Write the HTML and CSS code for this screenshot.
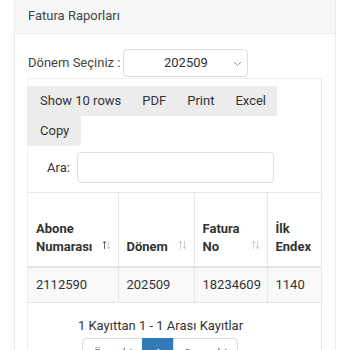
FILE: index.html
```html
<!DOCTYPE html>
<html lang="tr">
<head>
<meta charset="utf-8">
<link rel="stylesheet" href="styles.css">
</head>
<body>
<div class="card">
  <div class="card-header">Fatura Raporları</div>
  <div class="card-body">
    <div class="period">
      <span class="period-label">Dönem Seçiniz :</span>
      <div class="select">
        <span class="select-value">202509</span>
        <svg class="chev" width="9" height="6" viewBox="0 0 9 6"><path d="M1 1 L4.5 4.5 L8 1" fill="none" stroke="#999" stroke-width="1"/></svg>
      </div>
    </div>
    <div class="wrapper">
      <div class="buttons">
        <div class="btn-row">
          <span class="btn">Show 10 rows</span><span class="btn">PDF</span><span class="btn">Print</span><span class="btn">Excel</span>
        </div>
        <div class="btn-row">
          <span class="btn btn-last">Copy</span>
        </div>
      </div>
      <div class="filter">
        <span class="filter-label">Ara:</span>
        <div class="filter-input"></div>
      </div>
      <div class="table-scroll">
        <table class="grid">
          <colgroup>
            <col class="w1"><col class="w2"><col class="w3"><col class="w4">
          </colgroup>
          <thead>
            <tr>
              <th><span class="th-text">Abone<br>Numarası</span><svg class="sort" width="9" height="10" viewBox="0 0 9 10"><path d="M2.5 9 V1.5 M0.8 3.2 L2.5 1.3 L4.2 3.2" fill="none" stroke="#555" stroke-width="0.9"/><path d="M6.5 1 V8.5 M4.8 6.8 L6.5 8.7 L8.2 6.8" fill="none" stroke="#c8c8c8" stroke-width="0.9"/></svg></th>
              <th><span class="th-text">Dönem</span><svg class="sort" width="9" height="10" viewBox="0 0 9 10"><path d="M2.5 9 V1.5 M0.8 3.2 L2.5 1.3 L4.2 3.2" fill="none" stroke="#c8c8c8" stroke-width="0.9"/><path d="M6.5 1 V8.5 M4.8 6.8 L6.5 8.7 L8.2 6.8" fill="none" stroke="#c8c8c8" stroke-width="0.9"/></svg></th>
              <th><span class="th-text">Fatura<br>No</span><svg class="sort" width="9" height="10" viewBox="0 0 9 10"><path d="M2.5 9 V1.5 M0.8 3.2 L2.5 1.3 L4.2 3.2" fill="none" stroke="#c8c8c8" stroke-width="0.9"/><path d="M6.5 1 V8.5 M4.8 6.8 L6.5 8.7 L8.2 6.8" fill="none" stroke="#c8c8c8" stroke-width="0.9"/></svg></th>
              <th><span class="th-text">İlk<br>Endex</span><svg class="sort" width="9" height="10" viewBox="0 0 9 10"><path d="M2.5 9 V1.5 M0.8 3.2 L2.5 1.3 L4.2 3.2" fill="none" stroke="#c8c8c8" stroke-width="0.9"/><path d="M6.5 1 V8.5 M4.8 6.8 L6.5 8.7 L8.2 6.8" fill="none" stroke="#c8c8c8" stroke-width="0.9"/></svg></th>
            </tr>
          </thead>
          <tbody>
            <tr>
              <td>2112590</td>
              <td>202509</td>
              <td>18234609</td>
              <td>1140</td>
            </tr>
          </tbody>
        </table>
      </div>
      <div class="footer">
        <div class="info">1 Kayıttan 1 - 1 Arası Kayıtlar</div>
        <div class="pager">
          <span class="page">Önceki</span><span class="page page-active">1</span><span class="page">Sonraki</span>
        </div>
      </div>
    </div>
  </div>
</div>
</body>
</html>
```
FILE: styles.css
```css
html, body {
  margin: 0;
  padding: 0;
  background: #ffffff;
  font-family: Roboto, "Liberation Sans", Arial, sans-serif;
  font-size: 13px;
  color: #333;
  overflow: hidden;
}
.card {
  margin: -2px 14px 0 14px;
  border: 1px solid #ececec;
  border-radius: 3px;
  background: #fff;
}
.card-header {
  background: #f7f7f7;
  border-bottom: 1px solid #ececec;
  padding: 8px 13px 8px 13px;
  line-height: 18px;
  color: #444;
}
.card-body {
  padding: 15px 13px 0 13px;
}
.period {
  display: flex;
  align-items: center;
  gap: 3px;
  height: 27px;
}
.period-label {
  color: #444;
  line-height: 18px;
}
.select {
  box-sizing: border-box;
  width: 125px;
  height: 28px;
  border: 1px solid #dcdcdc;
  border-radius: 4px;
  display: flex;
  align-items: center;
  justify-content: center;
  position: relative;
}
.select-value {
  color: #333;
}
.chev {
  position: absolute;
  right: 5px;
  top: 11px;
}
.wrapper {
  margin-top: 2px;
  border: 1px solid #eeeeee;
  border-right: 1px solid #e8e8e8;
  padding-top: 7px;
  margin-left: -1px;
}
.btn-row {
  display: flex;
}
.btn {
  background: #ececec;
  line-height: 30px;
  padding: 0 10.5px;
}
.btn:first-child {
  padding-left: 12px;
}
.btn-row:first-child .btn:last-child {
  padding-right: 11px;
}
.btn-last {
  border-radius: 0 0 4px 0;
  padding-right: 12px;
}
.filter {
  display: flex;
  align-items: center;
  gap: 7px;
  padding: 6px 0 0 19px;
  height: 31px;
}
.filter-label {
  color: #333;
}
.filter-input {
  box-sizing: border-box;
  width: 197px;
  height: 31px;
  border: 1px solid #dcdcdc;
  border-radius: 4px;
}
.table-scroll {
  margin-top: 9px;
  overflow: hidden;
  border-top: 1px solid #e6e6e6;
}
.grid {
  border-collapse: collapse;
  table-layout: fixed;
  width: 310px;
  white-space: nowrap;
}
.w1 { width: 90px; }
.w2 { width: 76px; }
.w3 { width: 73px; }
.w4 { width: 71px; }
.grid th, .grid td {
  border-right: 1px solid #e6e6e6;
  padding: 8px 8px;
  line-height: 18px;
  text-align: left;
}
.grid th {
  font-weight: bold;
  color: #333;
  vertical-align: bottom;
  position: relative;
  border-bottom: 2px solid #e4e4e4;
  padding-top: 27px;
  padding-bottom: 10px;
}
.grid td {
  background: #f9f9f9;
  border-bottom: 1px solid #e6e6e6;
  color: #333;
}
.sort {
  position: absolute;
  right: 7px;
  bottom: 16px;
}
.footer {
  padding: 13px 28px 0 0;
  text-align: center;
}
.info {
  line-height: 20px;
  color: #333;
}
.pager {
  margin-top: 2px;
  display: inline-flex;
}
.page {
  border: 1px solid #ddd;
  line-height: 18px;
  padding: 6px 10px;
  color: #777;
  margin-left: -1px;
}
.page:first-child {
  border-radius: 4px 0 0 4px;
}
.page:last-child {
  border-radius: 0 4px 4px 0;
}
.page-active {
  background: #337ab7;
  border-color: #337ab7;
  color: #fff;
  padding: 6px 11px;
}
```
